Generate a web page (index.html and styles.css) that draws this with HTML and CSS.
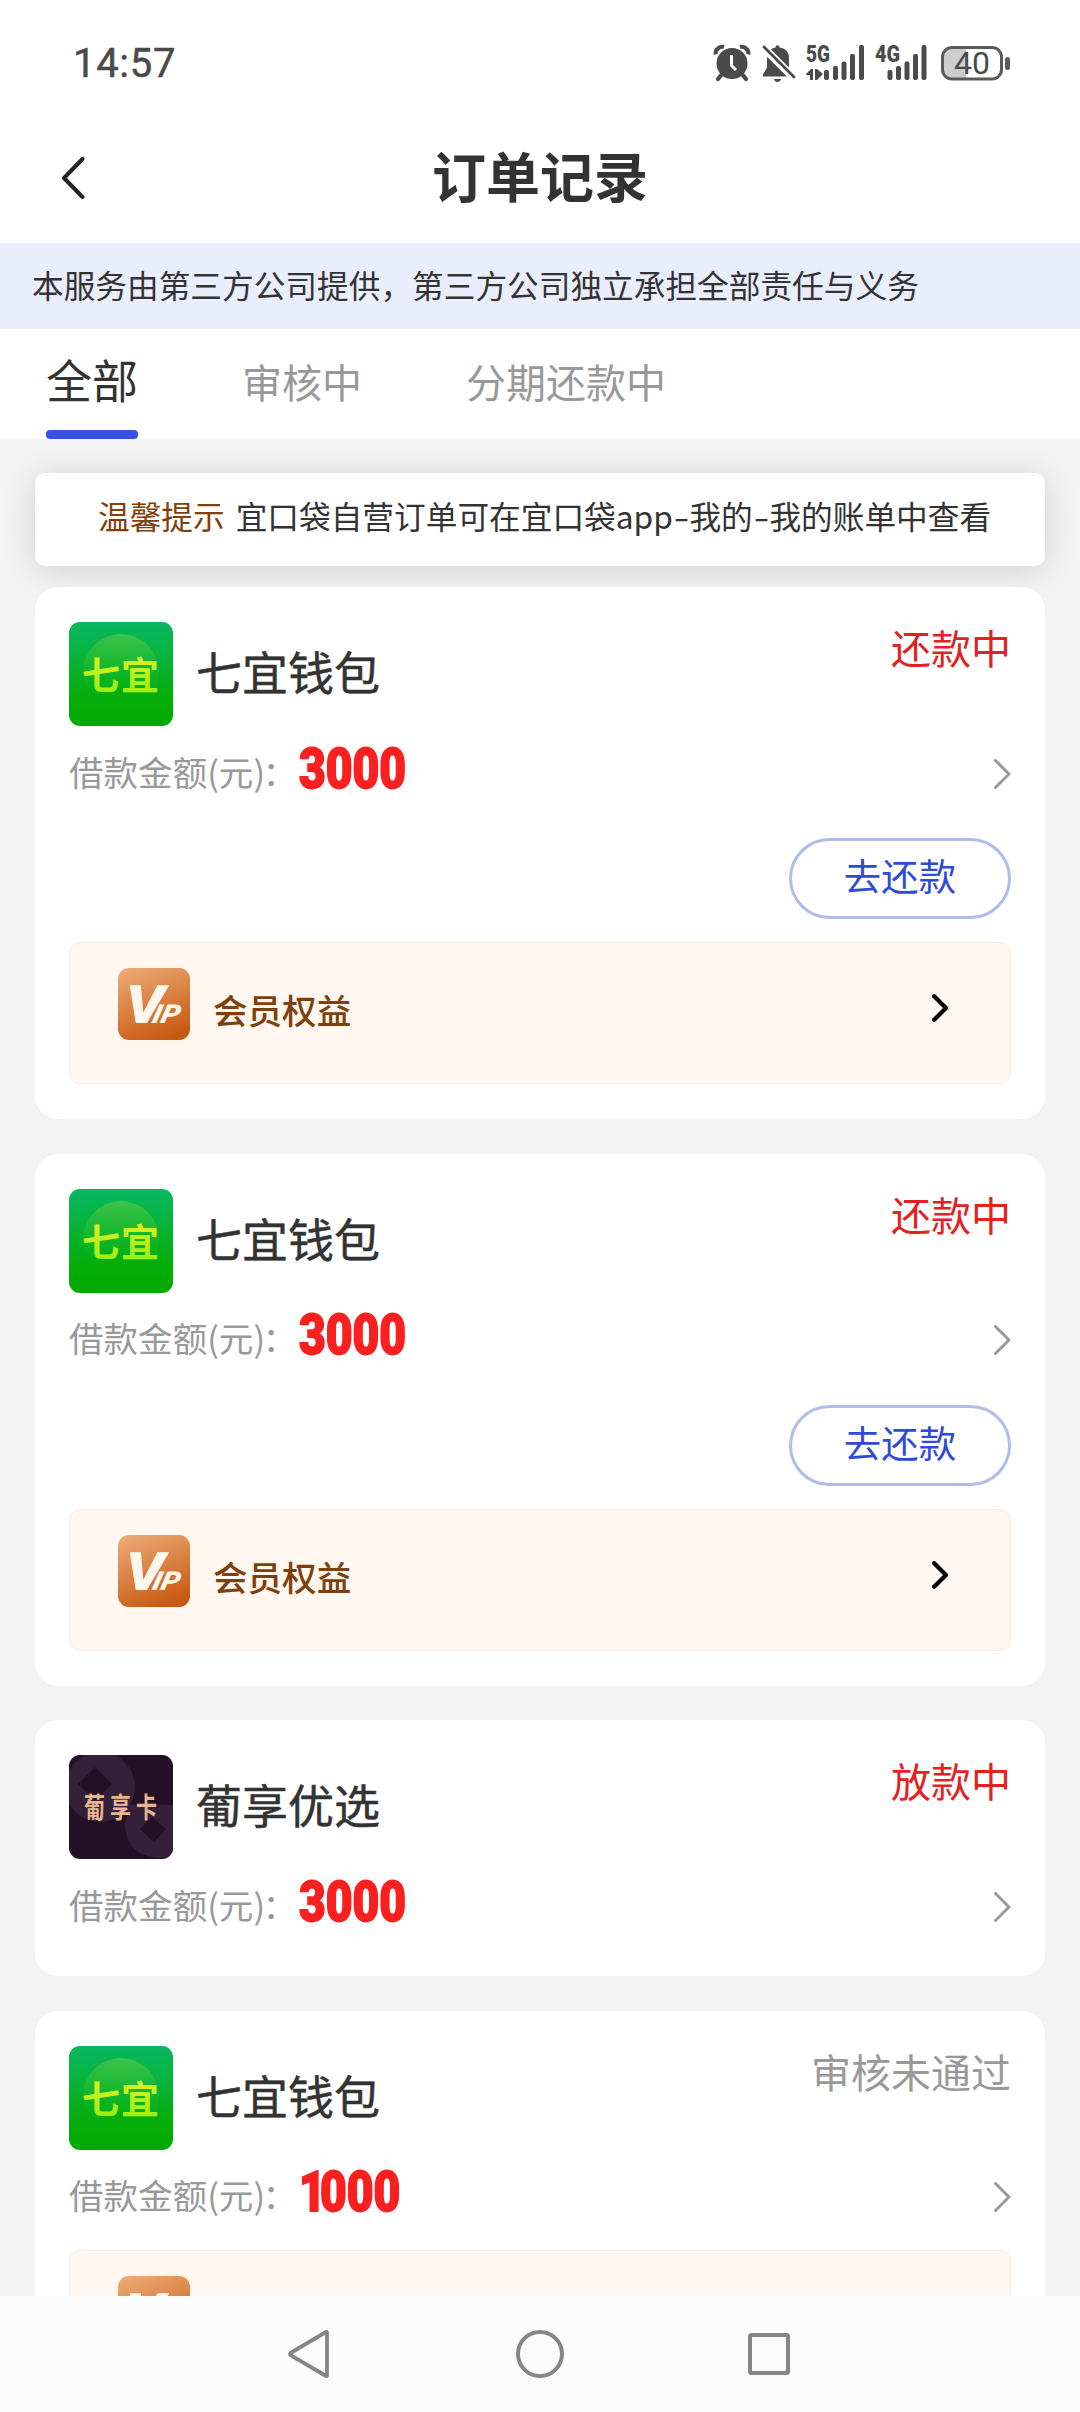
FILE: index.html
```html
<!DOCTYPE html>
<html lang="zh-CN">
<head>
<meta charset="utf-8">
<title>订单记录</title>
<link rel="stylesheet" href="styles.css">
</head>
<body>
<svg class="defs" width="0" height="0" aria-hidden="true">
  <defs>
    <linearGradient id="green" x1="0" y1="0" x2="0" y2="1"><stop offset="0" stop-color="#08b862"/><stop offset=".75" stop-color="#04ad08"/><stop offset="1" stop-color="#02aa00"/></linearGradient>
    <linearGradient id="glow" x1="0" y1="0" x2="0" y2="1"><stop offset="0" stop-color="#8ad63c" stop-opacity=".42"/><stop offset=".75" stop-color="#4cc81c" stop-opacity="0"/></linearGradient>
    <linearGradient id="lime" x1="0" y1="0" x2="0" y2="1"><stop offset="0" stop-color="#f4f02c"/><stop offset="1" stop-color="#8cf010"/></linearGradient>
    <linearGradient id="copper" x1=".2" y1="0" x2=".6" y2="1"><stop offset="0" stop-color="#eda873"/><stop offset="1" stop-color="#c75a12"/></linearGradient>
    <symbol id="logo-qiyi" viewBox="0 0 104 104">
      <rect width="104" height="104" rx="11" fill="url(#green)"/>
      <circle cx="52" cy="50" r="38" fill="url(#glow)"/>
      <text x="13" y="67" class="qiyi-text" fill="url(#lime)">七</text>
      <text x="52" y="67" class="qiyi-text" fill="url(#lime)">宜</text>
    </symbol>
    <symbol id="logo-pu" viewBox="0 0 104 104">
      <clipPath id="pu-clip"><rect width="104" height="104" rx="11"/></clipPath>
      <g clip-path="url(#pu-clip)">
        <rect width="104" height="104" fill="#230f26"/>
        <circle cx="31" cy="32" r="35" fill="#35203a"/>
        <path d="M26 12 43 29 26 46 9 29Z" fill="#230f26"/>
        <path d="M60 50h44v50q-10 4-22 2-26-6-26-34z" fill="#35203a"/>
        <path d="M83 62 97 74 85 87 71 74Z" fill="#230f26"/>
      </g>
      <g class="pu-text" fill="#e9b58e"><text transform="translate(15 63) scale(.75 1)">葡</text><text transform="translate(41 63) scale(.75 1)">享</text><text transform="translate(67 63) scale(.75 1)">卡</text></g>
    </symbol>
    <symbol id="vip" viewBox="0 0 72 72">
      <rect width="72" height="72" rx="11" fill="url(#copper)"/>
      <text class="vip-text" transform="translate(6.500 55) skewX(-2)" font-size="53" textLength="39" lengthAdjust="spacingAndGlyphs">V</text>
      <text class="vip-text" transform="translate(33 55) skewX(-14)" font-size="26" textLength="27" lengthAdjust="spacingAndGlyphs">IP</text>
    </symbol>
    <symbol id="more" viewBox="0 0 17 30"><path d="M1.500 1.500 15 15 1.500 28.500" fill="none" stroke="#999" stroke-width="3" stroke-linecap="round"/></symbol>
    <symbol id="go" viewBox="0 0 17 28"><path d="M2.200 2.200 14 14 2.200 25.800" fill="none" stroke="#000" stroke-width="4.200" stroke-linecap="round" stroke-linejoin="round"/></symbol>
  </defs>
</svg>
<div class="screen">
  <header class="status-bar">
    <span class="clock">14:57</span>
    <div class="status-icons">
      <svg width="36" height="36" viewBox="0 0 36 36">
        <circle cx="18" cy="18.500" r="15.500" fill="#4a4a4a"/>
        <path d="M1.500 9.500A7 7 0 0 1 10 2M26 2a7 7 0 0 1 8.500 7.500" stroke="#4a4a4a" stroke-width="4" fill="none"/>
        <path d="M8 29l-4 5M28 29l4 5" stroke="#4a4a4a" stroke-width="4.200" stroke-linecap="round"/>
        <path d="M17.500 10v10.500l4.500 4.500" stroke="#fff" stroke-width="3" fill="none"/>
      </svg>
      <svg class="bell" width="34" height="38" viewBox="0 0 34 38">
        <path d="M13.500 2.500c0-3 4-3 4 0 6.500 1 9.500 5 9.500 10v10l4 7v2H1v-2l4-7V12.500c0-5 3-9 8.500-10Z" fill="#4a4a4a"/>
        <path d="M12 34h7c-.5 4-6.500 4-7 0Z" fill="#4a4a4a"/>
        <path d="M0 1 33 34" stroke="#fff" stroke-width="8"/>
        <path d="M2 2 32 32" stroke="#4a4a4a" stroke-width="2.800" stroke-linecap="round"/>
      </svg>
      <svg class="net5" width="58" height="36" viewBox="0 0 58 36" fill="#4a4a4a">
        <text class="net-text" x="0" y="17" textLength="24" lengthAdjust="spacingAndGlyphs">5G</text>
        <path d="M0 29l5-5h2v11H4v-5H0zM9 24h2l6 5-6 6H9z"/>
        <rect x="18" y="25" width="5" height="10" rx="2"/><rect x="27" y="21" width="5" height="14" rx="2"/><rect x="35.500" y="16.500" width="5" height="18.500" rx="2"/><rect x="44" y="9" width="5" height="26" rx="2"/><rect x="53" y="0" width="5" height="35" rx="2"/>
      </svg>
      <svg class="net4" width="53" height="36" viewBox="0 0 53 36" fill="#4a4a4a">
        <text class="net-text" x="0" y="17" textLength="25" lengthAdjust="spacingAndGlyphs">4G</text>
        <rect x="12.500" y="25" width="5" height="10" rx="2"/><rect x="21" y="21" width="5" height="14" rx="2"/><rect x="29.500" y="16.500" width="5" height="18.500" rx="2"/><rect x="38" y="9" width="5" height="26" rx="2"/><rect x="46.500" y="0" width="5" height="35" rx="2"/>
      </svg>
      <svg class="battery" width="70" height="35" viewBox="0 0 70 35">
        <path d="M12 1.500h13v31H12Q2 32 2 22V12Q2 2 12 1.500Z" fill="#cdcdcd"/>
        <rect x="1.500" y="1.500" width="59" height="31.500" rx="9.500" fill="none" stroke="#5a5a5a" stroke-width="3"/>
        <rect x="64" y="11" width="5" height="13" rx="2.500" fill="#5a5a5a"/>
        <text class="charge" x="31" y="28" text-anchor="middle">40</text>
      </svg>
    </div>
  </header>
  <div class="title-bar">
    <svg class="back" width="24" height="42" viewBox="0 0 24 42"><path d="M21.500 2 3 21 21.500 40" fill="none" stroke="#252525" stroke-width="4" stroke-linecap="round" stroke-linejoin="round"/></svg>
    <h1>订单记录</h1>
  </div>
  <p class="provider">本服务由第三方公司提供，第三方公司独立承担全部责任与义务</p>
  <nav class="tabs">
    <a class="tab active">全部</a>
    <a class="tab">审核中</a>
    <a class="tab">分期还款中</a>
  </nav>
  <main class="orders">
    <p class="tip"><span class="tip-label">温馨提示</span><span>宜口袋自营订单可在宜口袋app<span class="dash">-</span>我的<span class="dash">-</span>我的账单中查看</span></p>

    <article class="card">
      <div class="head"><svg class="logo"><use href="#logo-qiyi"/></svg><h2>七宜钱包</h2><span class="state">还款中</span></div>
      <div class="amount"><span class="label">借款金额(元)<span class="colon">：</span></span><span class="value">3000</span><svg class="more"><use href="#more"/></svg></div>
      <button class="repay">去还款</button>
      <div class="benefit"><svg class="vip"><use href="#vip"/></svg><span class="benefit-name">会员权益</span><svg class="go"><use href="#go"/></svg></div>
    </article>

    <article class="card">
      <div class="head"><svg class="logo"><use href="#logo-qiyi"/></svg><h2>七宜钱包</h2><span class="state">还款中</span></div>
      <div class="amount"><span class="label">借款金额(元)<span class="colon">：</span></span><span class="value">3000</span><svg class="more"><use href="#more"/></svg></div>
      <button class="repay">去还款</button>
      <div class="benefit"><svg class="vip"><use href="#vip"/></svg><span class="benefit-name">会员权益</span><svg class="go"><use href="#go"/></svg></div>
    </article>

    <article class="card">
      <div class="head"><svg class="logo"><use href="#logo-pu"/></svg><h2>葡享优选</h2><span class="state">放款中</span></div>
      <div class="amount"><span class="label">借款金额(元)<span class="colon">：</span></span><span class="value">3000</span><svg class="more"><use href="#more"/></svg></div>
    </article>

    <article class="card">
      <div class="head"><svg class="logo"><use href="#logo-qiyi"/></svg><h2>七宜钱包</h2><span class="state rejected">审核未通过</span></div>
      <div class="amount"><span class="label">借款金额(元)<span class="colon">：</span></span><span class="value"><span class="one">1</span>000</span><svg class="more"><use href="#more"/></svg></div>
      <div class="benefit"><svg class="vip"><use href="#vip"/></svg></div>
    </article>
  </main>
  <footer class="nav-keys">
    <svg width="42" height="48" viewBox="0 0 42 48"><path d="M39 2.500v43Q39 46.500 38 46L2.500 25.200Q1.500 24 2.500 23L38 2Q39 1.500 39 2.500Z" fill="none" stroke="#868686" stroke-width="3.800" stroke-linejoin="round"/></svg>
    <svg class="home" width="48" height="48" viewBox="0 0 48 48"><circle cx="24" cy="24" r="22" fill="none" stroke="#868686" stroke-width="4"/></svg>
    <svg width="42" height="42" viewBox="0 0 42 42"><rect x="2" y="2" width="38" height="38" rx="1.500" fill="none" stroke="#868686" stroke-width="4"/></svg>
  </footer>
</div>
</body>
</html>
```
FILE: styles.css
```css
* { box-sizing: border-box; }

body {
  margin: 0;
  font-family: "Noto Sans CJK SC", "Noto Sans", sans-serif;
  color: #333;
}

h1, h2, p { margin: 0; }
svg { display: block; flex: none; }
.defs { position: absolute; }

.screen {
  display: flex;
  flex-direction: column;
  width: 1080px;
  height: 2412px;
  overflow: hidden;
  background: #fff;
}

.status-bar {
  display: flex;
  flex: none;
  justify-content: space-between;
  height: 116px;
  padding: 45px 69px 0 73px;
}
.clock {
  font: 400 40px/38px Roboto, sans-serif;
  letter-spacing: .7px;
  color: #4a4a4a;
  -webkit-text-stroke: .5px #4a4a4a;
}
.status-icons { display: flex; }
.status-icons svg { overflow: visible; }
.bell { margin-left: 12px; }
.net5 { margin-left: 10px; }
.net4 { margin-left: 11px; }
.battery { margin: 1px 0 0 13px; }
.net-text { font: 900 23px Roboto, sans-serif; }
.charge { font: 400 32px Roboto, sans-serif; fill: #4a4a4a; }

.title-bar {
  display: grid;
  flex: none;
  grid-template-columns: 100px 1fr 100px;
  align-items: center;
  height: 127px;
  padding-bottom: 4px;
}
.back { margin-left: 61px; }
.title-bar h1 {
  padding-bottom: 6px;
  font-size: 54px;
  font-weight: 700;
  line-height: 80px;
  text-align: center;
}

.provider {
  flex: none;
  height: 86px;
  padding-left: 32px;
  background: #eaedfc;
  font-size: 31.68px;
  line-height: 83px;
}

.tabs {
  display: flex;
  flex: none;
  align-items: stretch;
  gap: 104px;
  height: 110px;
  padding-left: 46px;
}
.tab {
  font-size: 40px;
  line-height: 105px;
  color: #999;
}
.tab.active {
  display: flex;
  flex-direction: column;
  justify-content: space-between;
  height: 110px;
  font-size: 46px;
  line-height: 99px;
  color: #333;
}
.tab.active::after {
  content: "";
  height: 9px;
  border-radius: 4px;
  background: #3751e4;
}

.orders {
  flex: 1;
  min-height: 0;
  overflow: hidden;
  padding: 34px 35px 0;
  background: #f3f3f3;
}
.tip {
  display: flex;
  gap: 11px;
  height: 93px;
  margin-bottom: 21px;
  padding-left: 63px;
  border-radius: 10px;
  background: #fff;
  box-shadow: 0 4px 34px rgba(0, 0, 0, .14);
  font-size: 31.68px;
  line-height: 85px;
  white-space: nowrap;
}
.tip-label { color: #80400a; }
.dash {
  display: inline-block;
  margin: 0 2.8px;
  transform: scaleX(1.45);
}

.card {
  margin-bottom: 34.5px;
  padding: 35px 34px 35px;
  border-radius: 23px;
  background: #fff;
}
.head { display: flex; height: 104px; }
.logo { width: 104px; height: 104px; }
.qiyi-text { font: 700 38px "Noto Sans CJK SC", sans-serif; }
.pu-text { font: 700 28px "Noto Sans CJK SC", sans-serif; }
.vip-text { font-family: Roboto, sans-serif; font-weight: 900; font-style: italic; fill: #fff6ee; }
.head h2 {
  margin-left: 23px;
  font-size: 46px;
  font-weight: 400;
  line-height: 96px;
  -webkit-text-stroke: .5px #333;
}
.state {
  margin-left: auto;
  font-size: 40px;
  line-height: 50px;
  color: #e3211f;
}
.state.rejected { color: #999; }

.amount {
  display: flex;
  align-items: center;
  height: 82px;
  padding-top: 13px;
}
.label {
  width: 230px;
  padding-bottom: 6px;
  font-size: 34.56px;
  line-height: 50px;
  color: #999;
  white-space: nowrap;
}
.colon { margin-left: -2.5px; }
.value {
  padding-bottom: 10px;
  font: 900 55px/60px Roboto, sans-serif;
  color: #fb2020;
  transform: scaleX(.84);
  transform-origin: left;
  -webkit-text-stroke: 1.8px #fb2020;
}
.one { letter-spacing: -7px; }
.more { width: 17px; height: 30px; margin-left: auto; }

.repay {
  display: block;
  width: 222px;
  height: 81px;
  margin: 30px 0 23px auto;
  padding: 0 0 6px;
  border: 3px solid #b0bcec;
  border-radius: 41px;
  background: none;
  font: 400 37.44px/69px "Noto Sans CJK SC", sans-serif;
  color: #2e4bd8;
}

.benefit {
  display: flex;
  height: 142px;
  padding: 25px 60px 0 48px;
  border: 1.5px solid #faebe2;
  border-radius: 11px;
  background: #fff7f0;
}
.amount + .benefit { margin-top: 18px; }
.vip { width: 72px; height: 72px; }
.benefit-name {
  margin-left: 23px;
  font-size: 34.56px;
  font-weight: 500;
  line-height: 82px;
  color: #80400a;
}
.go { width: 17px; height: 28px; margin: 26px 1px 0 auto; }

.nav-keys {
  display: flex;
  flex: none;
  align-items: center;
  justify-content: space-between;
  height: 116px;
  padding: 0 290px 0 288px;
  background: #fcfcfc;
}
.home { margin-left: 2px; }
```
